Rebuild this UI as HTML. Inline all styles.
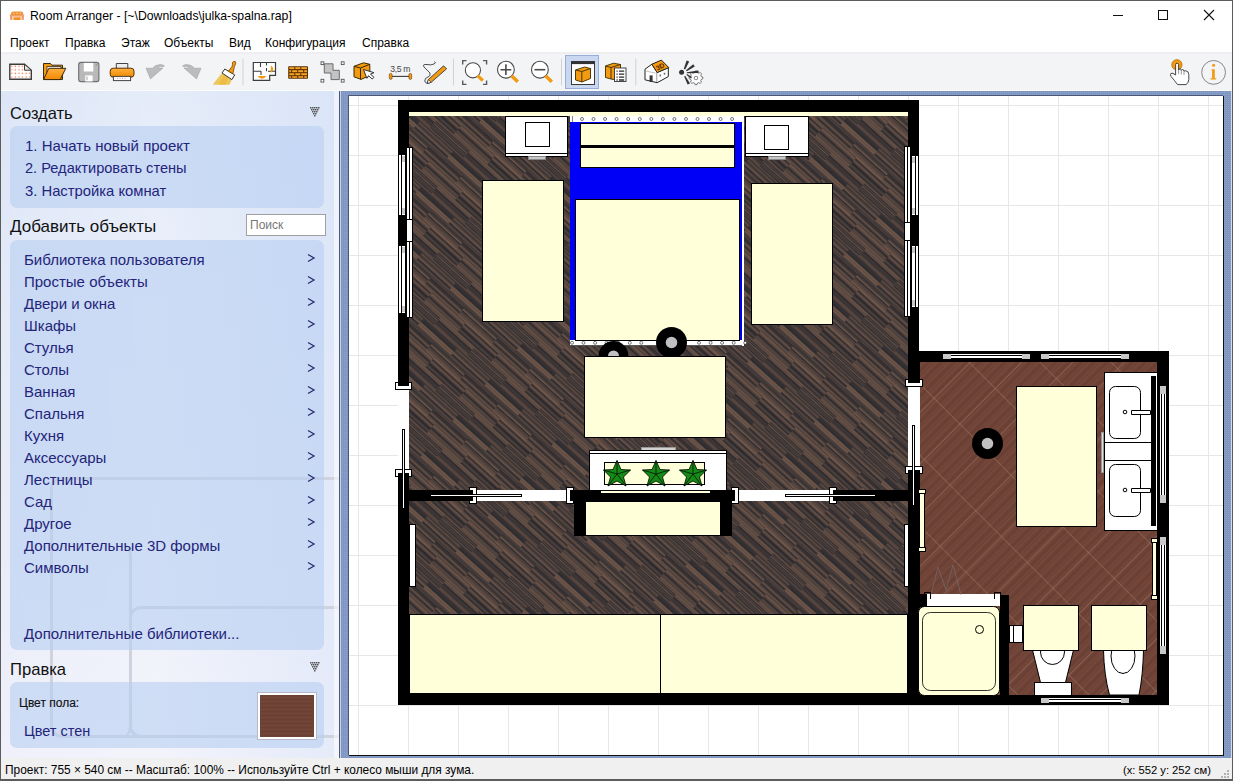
<!DOCTYPE html>
<html><head><meta charset="utf-8">
<style>
*{box-sizing:border-box}
html,body{margin:0;padding:0}
body{width:1233px;height:781px;position:relative;overflow:hidden;background:#f0f0f0;font-family:"Liberation Sans",sans-serif;color:#000}
.a{position:absolute}
.t{position:absolute;white-space:pre;line-height:1}
#title{left:0;top:0;width:1233px;height:31px;background:#fff}
#menu{left:0;top:31px;width:1233px;height:22px;background:#fff;border-bottom:1px solid #f0f0f0}
#tool{left:0;top:53px;width:1233px;height:38px;background:#f3f4f6;border-top:1px solid #ecedf0;border-bottom:1px solid #fbfbfc}
#panel{left:1px;top:91px;width:339px;height:667px;background:linear-gradient(90deg,rgba(255,255,255,0) 0%,rgba(255,255,255,.25) 45%,rgba(210,225,248,.35) 100%),linear-gradient(180deg,#dde6f7 0%,#e4eaf8 35%,#eaedf9 70%,#eff0fa 100%)}
.box{position:absolute;left:10px;width:314px;background:rgba(183,206,241,.6);border-radius:7px}
.hd{font-size:16.5px;color:#111}
.li{font-size:15px;color:#24247a}
.arr{position:absolute;left:306px}
#list .t{left:24px}
#status{left:0;top:758px;width:1233px;height:23px;background:#f0f0f0}
</style></head><body>
<div id="title" class="a"></div>
<div id="menu" class="a"></div>
<div id="tool" class="a"></div>
<div id="panel" class="a"></div>
<div id="status" class="a"></div>

<!-- title -->
<svg class="a" style="left:9px;top:10px" width="16" height="11" viewBox="0 0 16 11">
<rect x="2" y="1.4" width="12.2" height="5" rx="2.2" fill="#ef8e3c"/>
<rect x="3.9" y="2.7" width="1.9" height="1.1" fill="#ffcf70"/><rect x="7.1" y="2.7" width="1.9" height="1.1" fill="#ffcf70"/><rect x="10.3" y="2.7" width="1.9" height="1.1" fill="#ffcf70"/>
<rect x="3.5" y="5.6" width="9.2" height="1.6" fill="#f8c09a"/>
<path d="M0.8 5.5Q0.8 4.3 2.1 4.3Q3.5 4.3 3.5 5.5V10H1.2Z" fill="#f0a070"/>
<path d="M15.2 5.5Q15.2 4.3 13.9 4.3Q12.5 4.3 12.5 5.5V10H14.8Z" fill="#f0a070"/>
<rect x="4.3" y="7.2" width="7.5" height="2.8" rx=".8" fill="#f39028"/>
</svg>
<div class="t" style="left:30px;top:9.8px;font-size:12.25px">Room Arranger - [~\Downloads\julka-spalna.rap]</div>
<div class="a" style="left:1113px;top:15px;width:10px;height:1px;background:#111"></div>
<div class="a" style="left:1158px;top:10px;width:10px;height:10px;border:1px solid #111"></div>
<svg class="a" style="left:1203px;top:9px" width="12" height="12"><path d="M1 1L11 11M11 1L1 11" stroke="#111" stroke-width="1.1"/></svg>

<svg class="a" style="left:0;top:53px" width="1233" height="37" viewBox="0 53 1233 37">
<defs>
<pattern id="dots" patternUnits="userSpaceOnUse" width="3.6" height="3.6" x="10.5" y="65">
<rect x="0.6" y="0.6" width="1.3" height="1.3" fill="#ee7a4a"/>
</pattern>
<linearGradient id="og" x1="0" y1="0" x2="0" y2="1"><stop offset="0" stop-color="#ffb040"/><stop offset="1" stop-color="#f08a00"/></linearGradient>
</defs>
<!-- new -->
<path d="M9.8 64.3H24.5L31.3 70.2V79.2H9.8Z" fill="#fff" stroke="#3c3c3c" stroke-width="1.4"/>
<path d="M10.6 65H24.3L30.6 70.5V78.5H10.6Z" fill="url(#dots)"/>
<path d="M24.5 64.3V70.2H31.3Z" fill="#e8e8e8" stroke="#3c3c3c" stroke-width="1"/>
<!-- open -->
<path d="M43.5 79.5V63.5H50.5L51.8 65.2H62.5V79.5Z" fill="#f29a12" stroke="#3a2a10" stroke-width="1"/>
<path d="M47 79V66.5H61V75Z" fill="#fff" stroke="#3a2a10" stroke-width=".8"/>
<path d="M43.6 79.6L48.8 68.3H65.8L60.2 79.6Z" fill="url(#og)" stroke="#3a2a10" stroke-width="1"/>
<!-- save -->
<rect x="78.7" y="62.4" width="20.2" height="19.2" rx="2.2" fill="#b9b9b9" stroke="#6f6f6f" stroke-width="1.1"/>
<rect x="83.8" y="62.9" width="9.5" height="8.6" fill="#fff"/>
<rect x="85.2" y="75.4" width="7.4" height="6.1" fill="#fff"/>
<rect x="86.3" y="76.5" width="1.3" height="3.8" fill="#bbb"/>
<circle cx="96.3" cy="65" r=".7" fill="#888"/>
<!-- print -->
<path d="M116.3 69.8V63.5H127.8V69.8Z" fill="#eeeeee" stroke="#444" stroke-width="1"/>
<rect x="110.2" y="68.2" width="23.8" height="9" rx="3" fill="url(#og)" stroke="#5a3200" stroke-width="1"/>
<rect x="113.4" y="76.4" width="17.2" height="4.2" fill="#fff" stroke="#444" stroke-width="1"/>
<path d="M117 78.4h1M119.5 78.4h1M122 78.4h1M124.5 78.4h1" stroke="#d77" stroke-width=".8"/>
<!-- undo -->
<path d="M146 68.2H152.5Q155.5 64.6 160.5 64.6Q164.3 64.8 164.3 66.4H159.2Q158.2 67.2 159.2 68H163L150.5 78.9Z" fill="#bcbcbc" stroke="#a5a5a5" stroke-width=".6" stroke-linejoin="round"/>
<!-- redo -->
<path d="M201 68.2H194.5Q191.5 64.6 186.5 64.6Q182.7 64.8 182.7 66.4H187.8Q188.8 67.2 187.8 68H184L196.5 78.9Z" fill="#bcbcbc" stroke="#a5a5a5" stroke-width=".6" stroke-linejoin="round"/>
<!-- brush -->
<path d="M221.7 73.2L231.9 79.6L229.5 84.8H213.2Q213 84 214 83Z" fill="#ecc75a"/>
<path d="M224 74.6L228.5 77.4L225.5 84.8H219Z" fill="#f0b83a" opacity=".7"/>
<path d="M222 73L224.8 69L234.7 74.9L231.9 79.6Z" fill="#fff" stroke="#333" stroke-width="1" stroke-linejoin="round"/>
<path d="M228.4 71.2L232 66.6L232.5 64.4Q231.8 62 233.7 61.4Q236.2 61 235.7 63.6L234.4 66.6L232.9 73.6Z" fill="#f29a12" stroke="#7a4300" stroke-width=".8" stroke-linejoin="round"/>
<rect x="242.5" y="58.5" width="1" height="27" fill="#d2d2d2"/>
<!-- floor plan -->
<path d="M253.3 62.5H275.5V75.4H269.7V80.4H253.3Z" fill="#fff" stroke="#3c3c3c" stroke-width="1.2"/>
<path d="M253.3 71.2H261M268 71.2H275.5M260.5 62.5V67M266.5 62.5V65.5M266.5 68V71.2M261 71.2V75" fill="none" stroke="#3c3c3c" stroke-width="1.1"/>
<path d="M270.8 65.5Q276 69 270.8 73Z" fill="#f29a12"/>
<path d="M257.5 76Q262 81.5 266.5 76Z" fill="#f29a12"/>
<!-- brick -->
<rect x="288.2" y="66.2" width="19.8" height="12.5" rx=".8" fill="#5a2d00"/>
<g fill="#f6a423">
<rect x="289.3" y="67.2" width="5" height="1.9"/><rect x="295.3" y="67.2" width="5" height="1.9"/><rect x="301.3" y="67.2" width="5.7" height="1.9"/>
<rect x="289.3" y="70.2" width="1.9" height="2"/><rect x="292.2" y="70.2" width="5" height="2"/><rect x="298.2" y="70.2" width="5" height="2"/><rect x="304.2" y="70.2" width="2.8" height="2"/>
<rect x="289.3" y="73.2" width="5" height="2"/><rect x="295.3" y="73.2" width="5" height="2"/><rect x="301.3" y="73.2" width="5.7" height="2"/>
<rect x="289.3" y="76.2" width="1.9" height="1.6"/><rect x="292.2" y="76.2" width="5" height="1.6"/><rect x="298.2" y="76.2" width="5" height="1.6"/><rect x="304.2" y="76.2" width="2.8" height="1.6"/>
</g>
<!-- polygon -->
<path d="M324.3 63.8H333V70.3H339.3V79.6H331V73H324.3Z" fill="#c4c4c4" stroke="#6c6c6c" stroke-width="1"/>
<g fill="#fff" stroke="#555" stroke-width=".9">
<rect x="321" y="61.8" width="2.8" height="2.8"/><rect x="341.3" y="61.8" width="2.8" height="2.8"/><rect x="321" y="79.3" width="2.8" height="2.8"/><rect x="341.3" y="79.3" width="2.8" height="2.8"/>
</g>
<!-- box + cursor -->
<path d="M354 66.3L363.5 62.8L369.8 64.3L369.8 75.5L361 79.4L354 76.8Z" fill="#f29a12" stroke="#3a2a00" stroke-width="1"/>
<path d="M354 66.3L360.5 68L369.8 64.3M360.5 68V79.2" fill="none" stroke="#3a2a00" stroke-width="1"/>
<path d="M365 67.8L365.2 77.3L367.6 75.4L370 79.8L372.2 78.7L370 74.6L373.8 74.4Z" fill="#fff" stroke="#333" stroke-width=".9" transform="rotate(-20 369 73)"/>
<!-- 3.5m -->
<text x="390.2" y="71.6" font-family="Liberation Sans" font-size="8.6" fill="#444" letter-spacing="-.3">3,5 m</text>
<path d="M391 76.4H410" stroke="#3a3a3a" stroke-width="1.1"/>
<rect x="389.3" y="73.4" width="2.8" height="6" rx="1.4" fill="#f29a12" stroke="#6a3a00" stroke-width=".6"/>
<rect x="408.9" y="73.4" width="2.8" height="6" rx="1.4" fill="#f29a12" stroke="#6a3a00" stroke-width=".6"/>
<!-- pencil -->
<path d="M434.5 61.5Q436.5 63 434 64Q431 65.5 427 64.5Q422 64 424 67Q427 70 430 73Q431 76 428 77Q424.5 78 424.8 81Q425.5 84 428.5 82.5" fill="none" stroke="#3a3a3a" stroke-width=".9"/>
<path d="M443.6 65.8L446.6 68.8L431.2 82.3L427.2 83.6L428.4 79.5Z" fill="#f29a12" stroke="#3a3a3a" stroke-width=".9"/>
<path d="M428.4 79.5L431.2 82.3L427.2 83.6Z" fill="#fff" stroke="#3a3a3a" stroke-width=".8"/>
<rect x="453" y="58.5" width="1" height="27" fill="#d2d2d2"/>
<!-- zoom fit -->
<path d="M462.7 64.5V60.6H466.5M483 60.6H486.6V64.5M462.7 80.5V84.4H466.5M483 84.4H486.6V80.5" fill="none" stroke="#5a5a5a" stroke-width="1.4"/>
<circle cx="472.9" cy="70.3" r="7.6" fill="#fff" stroke="#4a4a4a" stroke-width="1.1"/>
<path d="M477.6 75.6L482.8 80.5" stroke="#f29a12" stroke-width="3.3"/>
<!-- zoom in -->
<circle cx="505.9" cy="69.7" r="8.4" fill="#fff" stroke="#4a4a4a" stroke-width="1.1"/>
<path d="M500.5 69.7H511.3M505.9 64.3V75.1" stroke="#4a4a4a" stroke-width="1.6"/>
<path d="M511.5 75.7L517.8 81.8" stroke="#f29a12" stroke-width="3.5"/>
<!-- zoom out -->
<circle cx="539.9" cy="69.7" r="8.4" fill="#fff" stroke="#4a4a4a" stroke-width="1.1"/>
<path d="M534.5 69.7H545.3" stroke="#4a4a4a" stroke-width="1.6"/>
<path d="M545.5 75.7L551.8 81.8" stroke="#f29a12" stroke-width="3.5"/>
<rect x="561" y="58.5" width="1" height="27" fill="#d2d2d2"/>
<!-- active button -->
<rect x="565.5" y="55.5" width="33" height="33" fill="#c9d7f0" stroke="#97aedb" stroke-width="1"/>
<rect x="571.5" y="61.5" width="23" height="23" fill="#fff" stroke="#3a3a3a" stroke-width="1"/>
<rect x="571.5" y="61.5" width="23" height="2.6" fill="#333"/>
<path d="M575.5 70L584.5 67L590.5 68.5V78.5L582 82L575.5 80Z" fill="#f29a12" stroke="#3a2a00" stroke-width=".9"/>
<path d="M575.5 70L581.8 71.5L590.5 68.5M581.8 71.5V81.8" fill="none" stroke="#3a2a00" stroke-width=".9"/>
<!-- box list -->
<path d="M605.5 66L613.5 63.2L620.5 64.5V76.5L613 79.5L605.5 77.5Z" fill="#f29a12" stroke="#3a2a00" stroke-width=".9"/>
<path d="M605.5 66L611 67.5L620.5 64.5M611 67.5V79" fill="none" stroke="#3a2a00" stroke-width=".9"/>
<rect x="614.5" y="68" width="11.5" height="13.5" fill="#fff" stroke="#333" stroke-width=".9"/>
<path d="M616.5 71.2h1.2M619 71.2h5.2M616.5 74.2h1.2M619 74.2h5.2M616.5 77.2h1.2M619 77.2h5.2M616.5 80h1.2M619 80h5.2" stroke="#2a2a2a" stroke-width="1.3"/>
<rect x="635.3" y="58.5" width="1" height="27" fill="#d2d2d2"/>
<!-- 3d house -->
<path d="M645 79.8V69.2L651.9 64.2L657.2 72.4V82.7Z" fill="#fff" stroke="#222" stroke-width="1" stroke-linejoin="round"/>
<path d="M657.2 72.4L668.3 67.6V76.6L657.2 82.7" fill="#fff" stroke="#222" stroke-width="1" stroke-linejoin="round"/>
<path d="M651.9 64.2L661.4 60.1L668.8 67.6L657.2 72.6Z" fill="#f29a12" stroke="#222" stroke-width="1" stroke-linejoin="round"/>
<text x="655.5" y="69" font-family="Liberation Sans" font-size="6.8" font-weight="bold" fill="#4a1e00" transform="rotate(-28 660 66)">3D</text>
<rect x="649.6" y="75.4" width="3" height="6.6" fill="#333"/>
<path d="M646 71Q650 72 655.5 73" stroke="#999" stroke-width=".6" fill="none"/>
<rect x="659.5" y="74.6" width="1.6" height="1.8" fill="#666"/><rect x="663.7" y="72.8" width="1.6" height="1.8" fill="#666"/>
<!-- light gear -->
<circle cx="681.6" cy="72.2" r="2.5" fill="#333"/>
<g transform="translate(696 78)">
<path d="M-1.2 -7H1.2L1.6 -5.1L3.4 -4.3L5 -5.4L6.6 -3.8L5.6 -2.2L6.2 -0.5L8 0V2.2L6.2 2.7L5.5 4.4L6.5 6L4.8 7.6L3.2 6.6L1.5 7.3L1.2 9H-1.2L-1.5 7.3L-3.2 6.6L-4.8 7.6L-6.5 6L-5.5 4.4L-6.2 2.7L-8 2.2V0L-6.2 -0.5L-5.6 -2.2L-6.6 -3.8L-5 -5.4L-3.4 -4.3L-1.6 -5.1Z" fill="#fff" stroke="#444" stroke-width=".8" transform="translate(0 -1) scale(.85)"/>
<circle cx="0" cy="0" r="1.8" fill="#fff" stroke="#555" stroke-width=".7"/>
</g>
<path d="M683.8 68.8L686.6 60.4L689.2 61.6L685.2 69.6ZM686 70.2L693.2 64.2L694.8 66.4L686.8 71.2ZM686.8 72.2L698.5 70.6L698.6 73L686.8 73.2ZM685.2 75.8L690 83.4L687.6 84.6L684.2 76.4Z" fill="#333"/>
<path d="M687 74L692 77L691 78.5L686.5 75Z" fill="#333"/>
<!-- hand -->
<circle cx="1176.9" cy="64.8" r="5.2" fill="#f29a12" stroke="#a05a00" stroke-width=".6"/>
<path d="M1175.6 75V64.6Q1175.6 63.2 1177.1 63.2Q1178.6 63.2 1178.6 64.6V70.2Q1178.8 68.8 1180 68.8Q1181.2 68.8 1181.3 70.4Q1181.6 69.6 1182.7 69.6Q1184 69.6 1184 71.3Q1184.4 70.8 1185.6 70.8Q1188.6 71 1188.8 74.5V79.5Q1188.6 82.5 1186.2 84.6H1177.6Q1174.5 80.5 1171.2 76.6Q1169.8 74.6 1171 73.4Q1172.6 72.4 1175.6 75Z" fill="#fff" stroke="#333" stroke-width=".9" stroke-linejoin="round"/>
<path d="M1178.6 70.4V74M1181.3 70.6V74.5M1184 71.4V75" stroke="#555" stroke-width=".6"/>
<!-- info -->
<circle cx="1213.6" cy="72.4" r="11.9" fill="none" stroke="#7a7a7a" stroke-width=".9"/>
<circle cx="1213.6" cy="65.3" r="1.5" fill="#f29a12"/>
<path d="M1211.5 69.2H1214.8V78.2H1216.2V79.6H1210.4V78.2H1212.1V70.6H1211.5Z" fill="#f29a12"/>
</svg>

<!-- menu -->
<div class="t" style="left:10px;top:37px;font-size:12px">Проект</div>
<div class="t" style="left:65px;top:37px;font-size:12px">Правка</div>
<div class="t" style="left:121px;top:37px;font-size:12px">Этаж</div>
<div class="t" style="left:164px;top:37px;font-size:12px">Объекты</div>
<div class="t" style="left:229px;top:37px;font-size:12px">Вид</div>
<div class="t" style="left:265px;top:37px;font-size:12px">Конфигурация</div>
<div class="t" style="left:362px;top:37px;font-size:12px">Справка</div>

<!-- status -->
<div class="t" style="left:5px;top:764.9px;font-size:11.9px">Проект: 755 × 540 см -- Масштаб: 100% -- Используйте Ctrl + колесо мыши для зума.</div>
<div class="t" style="left:1123px;top:764.8px;font-size:11.2px">(x: 552 y: 252 см)</div>
<svg class="a" style="left:0;top:0" width="1233" height="781"><g fill="#b4b4b4"><rect x="1227" y="770" width="2" height="2"/><rect x="1224" y="773" width="2" height="2"/><rect x="1227" y="773" width="2" height="2"/><rect x="1221" y="776" width="2" height="2"/><rect x="1224" y="776" width="2" height="2"/><rect x="1227" y="776" width="2" height="2"/></g></svg>

<!-- watermark -->
<div class="a" style="left:50px;top:477px;width:300px;height:261px;border:3px solid #cfd3dd;border-radius:12px"></div>
<div class="a" style="left:80px;top:543px;width:52px;height:195px;border-right:3px solid #cfd3dd;border-top-right-radius:12px;border-bottom-right-radius:12px"></div>
<div class="a" style="left:129px;top:606px;width:220px;height:132px;border:3px solid #cfd3dd;border-radius:12px"></div>
<div class="t hd" style="left:10px;top:104.8px">Создать</div>
<svg class="a" style="left:309px;top:106px" width="11" height="11"><g fill="#555"><rect x="1" y="1" width="1.5" height="1.5"/><rect x="3" y="1" width="1.5" height="1.5"/><rect x="5" y="1" width="1.5" height="1.5"/><rect x="7" y="1" width="1.5" height="1.5"/><rect x="9" y="1" width="1.5" height="1.5"/><rect x="2" y="3" width="1.5" height="1.5"/><rect x="4" y="3" width="1.5" height="1.5"/><rect x="6" y="3" width="1.5" height="1.5"/><rect x="8" y="3" width="1.5" height="1.5"/><rect x="3" y="5" width="1.5" height="1.5"/><rect x="5" y="5" width="1.5" height="1.5"/><rect x="7" y="5" width="1.5" height="1.5"/><rect x="4" y="7" width="1.5" height="1.5"/><rect x="6" y="7" width="1.5" height="1.5"/><rect x="5" y="9" width="1.5" height="1.5"/></g></svg>
<div class="box" style="top:126px;height:82px"></div>
<div class="t li" style="left:25px;top:138.4px">1. Начать новый проект</div>
<div class="t li" style="left:25px;top:160.8px;font-size:14.6px">2. Редактировать стены</div>
<div class="t li" style="left:25px;top:184.1px;font-size:14.8px">3. Настройка комнат</div>

<div class="t hd" style="left:10px;top:217.9px;font-size:17px">Добавить объекты</div>
<div class="a" style="left:246px;top:214px;width:80px;height:22px;background:#fff;border:1px solid #a0a0a0"></div>
<div class="t" style="left:250px;top:219px;font-size:12px;color:#777">Поиск</div>

<div class="box" style="top:240px;height:410px"></div>
<div id="list" class="a" style="left:0;top:0">
<div class="t li" style="top:252px">Библиотека пользователя</div><svg class="arr" style="top:253px" width="10" height="10"><path d="M2 1.5L8 5L2 8.5" fill="none" stroke="#2a2a72" stroke-width="1.3"/></svg>
<div class="t li" style="top:274px">Простые объекты</div><svg class="arr" style="top:275px" width="10" height="10"><path d="M2 1.5L8 5L2 8.5" fill="none" stroke="#2a2a72" stroke-width="1.3"/></svg>
<div class="t li" style="top:296px">Двери и окна</div><svg class="arr" style="top:297px" width="10" height="10"><path d="M2 1.5L8 5L2 8.5" fill="none" stroke="#2a2a72" stroke-width="1.3"/></svg>
<div class="t li" style="top:318px">Шкафы</div><svg class="arr" style="top:319px" width="10" height="10"><path d="M2 1.5L8 5L2 8.5" fill="none" stroke="#2a2a72" stroke-width="1.3"/></svg>
<div class="t li" style="top:340px">Стулья</div><svg class="arr" style="top:341px" width="10" height="10"><path d="M2 1.5L8 5L2 8.5" fill="none" stroke="#2a2a72" stroke-width="1.3"/></svg>
<div class="t li" style="top:362px">Столы</div><svg class="arr" style="top:363px" width="10" height="10"><path d="M2 1.5L8 5L2 8.5" fill="none" stroke="#2a2a72" stroke-width="1.3"/></svg>
<div class="t li" style="top:384px">Ванная</div><svg class="arr" style="top:385px" width="10" height="10"><path d="M2 1.5L8 5L2 8.5" fill="none" stroke="#2a2a72" stroke-width="1.3"/></svg>
<div class="t li" style="top:406px">Спальня</div><svg class="arr" style="top:407px" width="10" height="10"><path d="M2 1.5L8 5L2 8.5" fill="none" stroke="#2a2a72" stroke-width="1.3"/></svg>
<div class="t li" style="top:428px">Кухня</div><svg class="arr" style="top:429px" width="10" height="10"><path d="M2 1.5L8 5L2 8.5" fill="none" stroke="#2a2a72" stroke-width="1.3"/></svg>
<div class="t li" style="top:450px">Аксессуары</div><svg class="arr" style="top:451px" width="10" height="10"><path d="M2 1.5L8 5L2 8.5" fill="none" stroke="#2a2a72" stroke-width="1.3"/></svg>
<div class="t li" style="top:472px">Лестницы</div><svg class="arr" style="top:473px" width="10" height="10"><path d="M2 1.5L8 5L2 8.5" fill="none" stroke="#2a2a72" stroke-width="1.3"/></svg>
<div class="t li" style="top:494px">Сад</div><svg class="arr" style="top:495px" width="10" height="10"><path d="M2 1.5L8 5L2 8.5" fill="none" stroke="#2a2a72" stroke-width="1.3"/></svg>
<div class="t li" style="top:516px">Другое</div><svg class="arr" style="top:517px" width="10" height="10"><path d="M2 1.5L8 5L2 8.5" fill="none" stroke="#2a2a72" stroke-width="1.3"/></svg>
<div class="t li" style="top:538px">Дополнительные 3D формы</div><svg class="arr" style="top:539px" width="10" height="10"><path d="M2 1.5L8 5L2 8.5" fill="none" stroke="#2a2a72" stroke-width="1.3"/></svg>
<div class="t li" style="top:560px">Символы</div><svg class="arr" style="top:561px" width="10" height="10"><path d="M2 1.5L8 5L2 8.5" fill="none" stroke="#2a2a72" stroke-width="1.3"/></svg>
</div>
<div class="t li" style="left:24px;top:626.3px">Дополнительные библиотеки...</div>

<div class="t hd" style="left:10px;top:661.5px;font-size:16.6px">Правка</div>
<svg class="a" style="left:309px;top:661px" width="11" height="11"><g fill="#555"><rect x="1" y="1" width="1.5" height="1.5"/><rect x="3" y="1" width="1.5" height="1.5"/><rect x="5" y="1" width="1.5" height="1.5"/><rect x="7" y="1" width="1.5" height="1.5"/><rect x="9" y="1" width="1.5" height="1.5"/><rect x="2" y="3" width="1.5" height="1.5"/><rect x="4" y="3" width="1.5" height="1.5"/><rect x="6" y="3" width="1.5" height="1.5"/><rect x="8" y="3" width="1.5" height="1.5"/><rect x="3" y="5" width="1.5" height="1.5"/><rect x="5" y="5" width="1.5" height="1.5"/><rect x="7" y="5" width="1.5" height="1.5"/><rect x="4" y="7" width="1.5" height="1.5"/><rect x="6" y="7" width="1.5" height="1.5"/><rect x="5" y="9" width="1.5" height="1.5"/></g></svg>
<div class="box" style="top:682px;height:66px"></div>
<div class="t" style="left:19px;top:696.8px;font-size:12px;color:#111;-webkit-text-stroke:.15px #111">Цвет пола:</div>
<div class="t li" style="left:24px;top:724px;font-size:14.5px">Цвет стен</div>
<div class="a" style="left:257px;top:692px;width:60px;height:48px;background:#fff;border:1px solid #b8b8c8"></div>
<div class="a" style="left:260px;top:695px;width:54px;height:42px;background:repeating-linear-gradient(180deg,#6f4335 0px,#673c30 1px,#76493a 2px,#6c4134 3px,#714536 4px)"></div>
<div class="a" style="left:334px;top:91px;width:5px;height:667px;background:rgba(255,255,255,.55)"></div>



<svg class="a" style="left:339px;top:90px" width="894" height="668" viewBox="339 90 894 668">
<defs>
<pattern id="wood" patternUnits="userSpaceOnUse" width="48" height="90" patternTransform="rotate(-48)">
<rect width="48" height="90" fill="#403735"/>
<rect x="0.00" y="0" width="1.10" height="45" fill="#5e4840"/>
<rect x="1.10" y="0" width="0.70" height="45" fill="#5a4a42"/>
<rect x="1.80" y="0" width="1.60" height="45" fill="#4c3f3b"/>
<rect x="3.40" y="0" width="1.00" height="45" fill="#29282d"/>
<rect x="4.40" y="0" width="1.00" height="45" fill="#453a38"/>
<rect x="5.40" y="0" width="0.90" height="45" fill="#383434"/>
<rect x="6.30" y="0" width="1.60" height="45" fill="#29282d"/>
<rect x="7.90" y="0" width="1.00" height="45" fill="#6c5347"/>
<rect x="8.90" y="0" width="1.00" height="45" fill="#53453e"/>
<rect x="9.90" y="0" width="1.30" height="45" fill="#6c5347"/>
<rect x="11.20" y="0" width="0.80" height="45" fill="#5a4a42"/>
<rect x="0.00" y="45" width="1.00" height="45" fill="#5a4a42"/>
<rect x="1.00" y="45" width="1.00" height="45" fill="#2e2c30"/>
<rect x="2.00" y="45" width="1.30" height="45" fill="#4c3f3b"/>
<rect x="3.30" y="45" width="0.90" height="45" fill="#383434"/>
<rect x="4.20" y="45" width="0.70" height="45" fill="#53453e"/>
<rect x="4.90" y="45" width="1.30" height="45" fill="#333033"/>
<rect x="6.20" y="45" width="1.10" height="45" fill="#73594b"/>
<rect x="7.30" y="45" width="1.00" height="45" fill="#29282d"/>
<rect x="8.30" y="45" width="0.90" height="45" fill="#5a4a42"/>
<rect x="9.20" y="45" width="1.00" height="45" fill="#2e2c30"/>
<rect x="10.20" y="45" width="0.90" height="45" fill="#654d43"/>
<rect x="11.10" y="45" width="0.90" height="45" fill="#5e4840"/>
<rect x="12.00" y="22" width="1.60" height="45" fill="#2e2c30"/>
<rect x="13.60" y="22" width="1.00" height="45" fill="#4c3f3b"/>
<rect x="14.60" y="22" width="0.70" height="45" fill="#5a4a42"/>
<rect x="15.30" y="22" width="0.90" height="45" fill="#383434"/>
<rect x="16.20" y="22" width="2.00" height="45" fill="#29282d"/>
<rect x="18.20" y="22" width="1.10" height="45" fill="#4c3f3b"/>
<rect x="19.30" y="22" width="2.00" height="45" fill="#654d43"/>
<rect x="21.30" y="22" width="0.90" height="45" fill="#2e2c30"/>
<rect x="22.20" y="22" width="1.00" height="45" fill="#383434"/>
<rect x="23.20" y="22" width="0.80" height="45" fill="#73594b"/>
<rect x="12.00" y="67" width="1.30" height="23" fill="#5a4a42"/>
<rect x="12.00" y="0" width="1.30" height="22" fill="#5a4a42"/>
<rect x="13.30" y="67" width="1.00" height="23" fill="#73594b"/>
<rect x="13.30" y="0" width="1.00" height="22" fill="#73594b"/>
<rect x="14.30" y="67" width="0.90" height="23" fill="#4c3f3b"/>
<rect x="14.30" y="0" width="0.90" height="22" fill="#4c3f3b"/>
<rect x="15.20" y="67" width="1.10" height="23" fill="#53453e"/>
<rect x="15.20" y="0" width="1.10" height="22" fill="#53453e"/>
<rect x="16.30" y="67" width="0.70" height="23" fill="#5e4840"/>
<rect x="16.30" y="0" width="0.70" height="22" fill="#5e4840"/>
<rect x="17.00" y="67" width="0.70" height="23" fill="#53453e"/>
<rect x="17.00" y="0" width="0.70" height="22" fill="#53453e"/>
<rect x="17.70" y="67" width="1.60" height="23" fill="#29282d"/>
<rect x="17.70" y="0" width="1.60" height="22" fill="#29282d"/>
<rect x="19.30" y="67" width="1.30" height="23" fill="#453a38"/>
<rect x="19.30" y="0" width="1.30" height="22" fill="#453a38"/>
<rect x="20.60" y="67" width="1.00" height="23" fill="#73594b"/>
<rect x="20.60" y="0" width="1.00" height="22" fill="#73594b"/>
<rect x="21.60" y="67" width="2.00" height="23" fill="#6c5347"/>
<rect x="21.60" y="0" width="2.00" height="22" fill="#6c5347"/>
<rect x="23.60" y="67" width="0.40" height="23" fill="#29282d"/>
<rect x="23.60" y="0" width="0.40" height="22" fill="#29282d"/>
<rect x="24.00" y="11" width="1.00" height="45" fill="#73594b"/>
<rect x="25.00" y="11" width="1.00" height="45" fill="#5e4840"/>
<rect x="26.00" y="11" width="1.00" height="45" fill="#5a4a42"/>
<rect x="27.00" y="11" width="0.90" height="45" fill="#53453e"/>
<rect x="27.90" y="11" width="2.00" height="45" fill="#4c3f3b"/>
<rect x="29.90" y="11" width="1.10" height="45" fill="#29282d"/>
<rect x="31.00" y="11" width="1.00" height="45" fill="#73594b"/>
<rect x="32.00" y="11" width="1.60" height="45" fill="#53453e"/>
<rect x="33.60" y="11" width="1.30" height="45" fill="#333033"/>
<rect x="34.90" y="11" width="1.00" height="45" fill="#383434"/>
<rect x="35.90" y="11" width="0.10" height="45" fill="#6c5347"/>
<rect x="24.00" y="56" width="1.10" height="34" fill="#5a4a42"/>
<rect x="24.00" y="0" width="1.10" height="11" fill="#5a4a42"/>
<rect x="25.10" y="56" width="1.00" height="34" fill="#654d43"/>
<rect x="25.10" y="0" width="1.00" height="11" fill="#654d43"/>
<rect x="26.10" y="56" width="1.30" height="34" fill="#383434"/>
<rect x="26.10" y="0" width="1.30" height="11" fill="#383434"/>
<rect x="27.40" y="56" width="0.90" height="34" fill="#29282d"/>
<rect x="27.40" y="0" width="0.90" height="11" fill="#29282d"/>
<rect x="28.30" y="56" width="1.10" height="34" fill="#5e4840"/>
<rect x="28.30" y="0" width="1.10" height="11" fill="#5e4840"/>
<rect x="29.40" y="56" width="1.00" height="34" fill="#73594b"/>
<rect x="29.40" y="0" width="1.00" height="11" fill="#73594b"/>
<rect x="30.40" y="56" width="0.70" height="34" fill="#453a38"/>
<rect x="30.40" y="0" width="0.70" height="11" fill="#453a38"/>
<rect x="31.10" y="56" width="1.10" height="34" fill="#2e2c30"/>
<rect x="31.10" y="0" width="1.10" height="11" fill="#2e2c30"/>
<rect x="32.20" y="56" width="0.90" height="34" fill="#383434"/>
<rect x="32.20" y="0" width="0.90" height="11" fill="#383434"/>
<rect x="33.10" y="56" width="1.30" height="34" fill="#29282d"/>
<rect x="33.10" y="0" width="1.30" height="11" fill="#29282d"/>
<rect x="34.40" y="56" width="1.00" height="34" fill="#654d43"/>
<rect x="34.40" y="0" width="1.00" height="11" fill="#654d43"/>
<rect x="35.40" y="56" width="0.60" height="34" fill="#2e2c30"/>
<rect x="35.40" y="0" width="0.60" height="11" fill="#2e2c30"/>
<rect x="36.00" y="33" width="1.10" height="45" fill="#53453e"/>
<rect x="37.10" y="33" width="0.70" height="45" fill="#5e4840"/>
<rect x="37.80" y="33" width="1.30" height="45" fill="#333033"/>
<rect x="39.10" y="33" width="0.90" height="45" fill="#2e2c30"/>
<rect x="40.00" y="33" width="1.00" height="45" fill="#6c5347"/>
<rect x="41.00" y="33" width="1.00" height="45" fill="#5a4a42"/>
<rect x="42.00" y="33" width="1.30" height="45" fill="#4c3f3b"/>
<rect x="43.30" y="33" width="1.10" height="45" fill="#333033"/>
<rect x="44.40" y="33" width="0.70" height="45" fill="#53453e"/>
<rect x="45.10" y="33" width="1.00" height="45" fill="#654d43"/>
<rect x="46.10" y="33" width="1.00" height="45" fill="#383434"/>
<rect x="47.10" y="33" width="0.70" height="45" fill="#4c3f3b"/>
<rect x="47.80" y="33" width="0.20" height="45" fill="#333033"/>
<rect x="36.00" y="78" width="0.70" height="12" fill="#5a4a42"/>
<rect x="36.00" y="0" width="0.70" height="33" fill="#5a4a42"/>
<rect x="36.70" y="78" width="1.00" height="12" fill="#333033"/>
<rect x="36.70" y="0" width="1.00" height="33" fill="#333033"/>
<rect x="37.70" y="78" width="2.00" height="12" fill="#73594b"/>
<rect x="37.70" y="0" width="2.00" height="33" fill="#73594b"/>
<rect x="39.70" y="78" width="1.00" height="12" fill="#654d43"/>
<rect x="39.70" y="0" width="1.00" height="33" fill="#654d43"/>
<rect x="40.70" y="78" width="1.60" height="12" fill="#73594b"/>
<rect x="40.70" y="0" width="1.60" height="33" fill="#73594b"/>
<rect x="42.30" y="78" width="0.70" height="12" fill="#383434"/>
<rect x="42.30" y="0" width="0.70" height="33" fill="#383434"/>
<rect x="43.00" y="78" width="1.10" height="12" fill="#29282d"/>
<rect x="43.00" y="0" width="1.10" height="33" fill="#29282d"/>
<rect x="44.10" y="78" width="1.60" height="12" fill="#333033"/>
<rect x="44.10" y="0" width="1.60" height="33" fill="#333033"/>
<rect x="45.70" y="78" width="1.00" height="12" fill="#29282d"/>
<rect x="45.70" y="0" width="1.00" height="33" fill="#29282d"/>
<rect x="46.70" y="78" width="1.30" height="12" fill="#453a38"/>
<rect x="46.70" y="0" width="1.30" height="33" fill="#453a38"/>
</pattern>
<pattern id="wood2" patternUnits="userSpaceOnUse" width="36" height="36" patternTransform="rotate(-50)">
<rect x="0" y="0" width="18" height="18" fill="#000" opacity=".12"/>
<rect x="18" y="18" width="18" height="18" fill="#fff" opacity=".05"/>
</pattern>
<pattern id="dith" patternUnits="userSpaceOnUse" width="2" height="2"><rect x="0" y="0" width="1" height="1" fill="#9fb2d8" opacity=".5"/></pattern>
<pattern id="tile" patternUnits="userSpaceOnUse" x="31.6" y="22.2" width="36.4" height="50.2" patternTransform="rotate(45)">
<rect x="0" y="0" width="0.9" height="50.2" fill="#a58070" opacity=".45"/>
<rect x="0" y="0" width="36.4" height="0.9" fill="#a58070" opacity=".45"/>
</pattern>
<pattern id="streak" patternUnits="userSpaceOnUse" width="9" height="50" patternTransform="rotate(45)">
<rect x="0" y="0" width="1" height="50" fill="#7f5040" opacity=".55"/>
<rect x="3" y="0" width="1.5" height="50" fill="#5f382c" opacity=".45"/>
<rect x="6" y="0" width="1" height="50" fill="#7a4c3d" opacity=".4"/>
</pattern>
</defs>
<g shape-rendering="crispEdges">
<rect x="339" y="91" width="1" height="667" fill="#4e5874"/><rect x="340" y="91" width="1" height="667" fill="#c9d2e6"/>
<rect x="341" y="91" width="890" height="667" fill="#7f96c3"/><rect x="341" y="91" width="890" height="667" fill="url(#dith)"/>
<rect x="339" y="90" width="893" height="1" fill="#fbfbfc"/>
<rect x="349" y="96" width="874" height="659" fill="#fff"/>
<rect x="348" y="95" width="875" height="1" fill="#4a5676"/>
<rect x="348" y="95" width="1" height="660" fill="#4a5676"/>
<rect x="1223" y="96" width="1" height="660" fill="#111"/>
<rect x="349" y="755" width="875" height="1" fill="#111"/>
<rect x="1231" y="91" width="1" height="667" fill="#d8dce6"/>
</g>
<g fill="#e7e7e7" shape-rendering="crispEdges">
<rect x="358" y="96" width="1" height="659"/><rect x="408" y="96" width="1" height="659"/><rect x="458" y="96" width="1" height="659"/><rect x="508" y="96" width="1" height="659"/><rect x="558" y="96" width="1" height="659"/><rect x="608" y="96" width="1" height="659"/><rect x="658" y="96" width="1" height="659"/><rect x="708" y="96" width="1" height="659"/><rect x="758" y="96" width="1" height="659"/><rect x="808" y="96" width="1" height="659"/><rect x="858" y="96" width="1" height="659"/><rect x="908" y="96" width="1" height="659"/><rect x="958" y="96" width="1" height="659"/><rect x="1008" y="96" width="1" height="659"/><rect x="1058" y="96" width="1" height="659"/><rect x="1108" y="96" width="1" height="659"/><rect x="1158" y="96" width="1" height="659"/><rect x="1208" y="96" width="1" height="659"/>
<rect x="349" y="105" width="874" height="1"/><rect x="349" y="155" width="874" height="1"/><rect x="349" y="205" width="874" height="1"/><rect x="349" y="255" width="874" height="1"/><rect x="349" y="305" width="874" height="1"/><rect x="349" y="355" width="874" height="1"/><rect x="349" y="405" width="874" height="1"/><rect x="349" y="455" width="874" height="1"/><rect x="349" y="505" width="874" height="1"/><rect x="349" y="555" width="874" height="1"/><rect x="349" y="605" width="874" height="1"/><rect x="349" y="655" width="874" height="1"/><rect x="349" y="705" width="874" height="1"/>
</g>
<!-- walls -->
<g shape-rendering="crispEdges">
<rect x="398" y="100" width="521" height="605" fill="#000"/>
<rect x="908" y="351" width="261" height="354" fill="#000"/>
<rect x="409" y="116" width="499" height="578" fill="url(#wood)"/>
<rect x="409" y="112" width="499" height="4" fill="#ffffd9"/>
<rect x="920" y="362" width="237" height="333" fill="#6f4337"/>
<rect x="920" y="362" width="237" height="333" fill="url(#streak)"/>
<rect x="920" y="362" width="237" height="333" fill="url(#tile)"/>
</g>
<g id="fp" stroke-linejoin="miter">
<!-- left wall windows -->
<g shape-rendering="crispEdges" stroke="#000" stroke-width="1">
<rect x="398.5" y="154.5" width="7" height="61" fill="#fff"/>
<path d="M401.5 155V215" />
<rect x="402" y="156" width="3" height="6" fill="#c8c8c8" stroke="none"/>
<rect x="402" y="208" width="3" height="6" fill="#c8c8c8" stroke="none"/>
<rect x="398.5" y="245.5" width="7" height="68" fill="#fff"/>
<path d="M401.5 246V313" />
<rect x="402" y="247" width="3" height="6" fill="#c8c8c8" stroke="none"/>
<rect x="402" y="306" width="3" height="6" fill="#c8c8c8" stroke="none"/>
<rect x="406.5" y="147.5" width="6" height="170" fill="#fff"/>
<path d="M409.5 148V219M406 219.5H413M406 241.5H413M409.5 242V317"/>
</g>
<!-- right wall windows (bedroom) -->
<g shape-rendering="crispEdges" stroke="#000" stroke-width="1">
<rect x="911.5" y="155.5" width="7" height="60" fill="#fff"/>
<path d="M915.5 156V215" />
<rect x="912" y="157" width="3" height="6" fill="#c8c8c8" stroke="none"/>
<rect x="912" y="208" width="3" height="6" fill="#c8c8c8" stroke="none"/>
<rect x="911.5" y="245.5" width="7" height="62" fill="#fff"/>
<path d="M915.5 246V307" />
<rect x="912" y="247" width="3" height="6" fill="#c8c8c8" stroke="none"/>
<rect x="912" y="300" width="3" height="6" fill="#c8c8c8" stroke="none"/>
<rect x="904.5" y="146.5" width="6" height="170" fill="#fff"/>
<path d="M907.5 147V222M904 222.5H911M904 240.5H911M907.5 241V316"/>
</g>
<!-- doors in walls -->
<g shape-rendering="crispEdges">
<rect x="398" y="386" width="11" height="87" fill="#fff"/>
<rect x="395.5" y="382.5" width="16" height="7" fill="#fff" stroke="#000"/>
<rect x="398" y="378" width="11" height="8" fill="#000"/>
<rect x="395.5" y="469.5" width="16" height="7" fill="#fff" stroke="#000"/>
<rect x="398" y="473" width="11" height="10" fill="#000"/>
<rect x="402.5" y="429.5" width="2" height="79" fill="#fff" stroke="#000" stroke-width="1"/>

<rect x="908" y="383" width="12" height="87" fill="#fff"/>
<rect x="905.5" y="379.5" width="17" height="7" fill="#fff" stroke="#000"/>
<rect x="908" y="375" width="12" height="8" fill="#000"/>
<rect x="905.5" y="466.5" width="17" height="7" fill="#fff" stroke="#000"/>
<rect x="908" y="470" width="12" height="10" fill="#000"/>
<rect x="912.5" y="425.5" width="2" height="80" fill="#fff" stroke="#000" stroke-width="1"/>

<rect x="409" y="490" width="499" height="11" fill="#000"/>
<rect x="473" y="490" width="97" height="11" fill="#fff"/>
<rect x="735" y="490" width="98" height="11" fill="#fff"/>
<rect x="469.5" y="487.5" width="7" height="16" fill="#fff" stroke="#000"/>
<rect x="462" y="490" width="11" height="11" fill="#000"/>
<rect x="566.5" y="487.5" width="7" height="16" fill="#fff" stroke="#000"/>
<rect x="570" y="490" width="10" height="11" fill="#000"/>
<rect x="731.5" y="487.5" width="7" height="16" fill="#fff" stroke="#000"/>
<rect x="726" y="490" width="9" height="11" fill="#000"/>
<rect x="829.5" y="487.5" width="7" height="16" fill="#fff" stroke="#000"/>
<rect x="833" y="490" width="10" height="11" fill="#000"/>
<rect x="430.5" y="494.5" width="91" height="2" fill="#fff" stroke="#000"/>
<rect x="785.5" y="494.5" width="90" height="2" fill="#fff" stroke="#000"/>
<!-- lower windows bedroom -->
<rect x="409.5" y="524.5" width="6" height="62" fill="#fff" stroke="#000"/>
<rect x="904.5" y="524.5" width="4" height="62" fill="#fff" stroke="#000"/>
<!-- towel holder bathroom left -->
<rect x="919.5" y="493.5" width="5" height="54" fill="#ffffd9" stroke="#000"/>
<rect x="918.5" y="489.5" width="7" height="4" fill="#ffffd9" stroke="#000"/>
<rect x="918.5" y="547.5" width="7" height="4" fill="#ffffd9" stroke="#000"/>
</g>
<!-- furniture bedroom -->
<g shape-rendering="crispEdges" stroke="#000" stroke-width="1">
<rect x="505.5" y="116.5" width="62" height="40" fill="#fff"/>
<path d="M506 153.5H567" />
<rect x="528.5" y="156.5" width="17" height="3" fill="#c8c8c8" stroke="#888"/>
<rect x="525.5" y="122.5" width="24" height="24" fill="#fff"/>
<rect x="745.5" y="116.5" width="63" height="40" fill="#fff"/>
<path d="M746 153.5H808" />
<rect x="768.5" y="156.5" width="17" height="3" fill="#c8c8c8" stroke="#888"/>
<rect x="764.5" y="125.5" width="24" height="24" fill="#fff"/>
<!-- bed -->
<rect x="570" y="116" width="174" height="229" fill="#0000f6" stroke="none"/>
<rect x="570" y="116" width="174" height="6" fill="#fff" stroke="none"/><rect x="572" y="116" width="1" height="6" fill="#888" stroke="none"/>
<rect x="570" y="340" width="174" height="6" fill="#fff" stroke="none"/><rect x="570" y="345" width="174" height="1" fill="#555" stroke="none"/>
<rect x="742" y="116.5" width="2" height="229" fill="#fff" stroke="none"/>
<rect x="580.5" y="123.5" width="154" height="44" fill="#ffffd9"/>
<rect x="580" y="145" width="155" height="3" fill="#000" stroke="none"/>
<rect x="575.5" y="199.5" width="164" height="141" fill="#ffffd9"/>
<rect x="482.5" y="180.5" width="81" height="141" fill="#ffffd9"/>
<rect x="751.5" y="183.5" width="81" height="141" fill="#ffffd9"/>
</g>
<g fill="#fff" stroke="#222" stroke-width=".6">
<circle cx="582.0" cy="119" r="1.5"/><circle cx="593.5" cy="119" r="1.5"/><circle cx="605.1" cy="119" r="1.5"/><circle cx="616.6" cy="119" r="1.5"/><circle cx="628.2" cy="119" r="1.5"/><circle cx="639.8" cy="119" r="1.5"/><circle cx="651.3" cy="119" r="1.5"/><circle cx="662.9" cy="119" r="1.5"/><circle cx="674.4" cy="119" r="1.5"/><circle cx="686.0" cy="119" r="1.5"/><circle cx="697.5" cy="119" r="1.5"/><circle cx="709.0" cy="119" r="1.5"/><circle cx="720.6" cy="119" r="1.5"/><circle cx="732.1" cy="119" r="1.5"/>
<circle cx="572.0" cy="342.8" r="1.5"/><circle cx="583.5" cy="342.8" r="1.5"/><circle cx="595.1" cy="342.8" r="1.5"/><circle cx="606.6" cy="342.8" r="1.5"/><circle cx="618.2" cy="342.8" r="1.5"/><circle cx="629.8" cy="342.8" r="1.5"/><circle cx="641.3" cy="342.8" r="1.5"/><circle cx="699.0" cy="342.8" r="1.5"/><circle cx="710.6" cy="342.8" r="1.5"/><circle cx="722.1" cy="342.8" r="1.5"/><circle cx="733.7" cy="342.8" r="1.5"/><circle cx="745.2" cy="342.8" r="1.5"/>
</g>
<g>
<circle cx="613.5" cy="356" r="15" fill="#000"/><circle cx="613.5" cy="356" r="5.5" fill="#c0c0c0"/>
<circle cx="671.5" cy="342.5" r="15.5" fill="#000"/><circle cx="671.5" cy="342.5" r="5.8" fill="#c0c0c0"/>
<circle cx="987.5" cy="443.5" r="15.5" fill="#000"/><circle cx="987.5" cy="443.5" r="5.8" fill="#c0c0c0"/>
</g>
<g shape-rendering="crispEdges" stroke="#000" stroke-width="1">
<rect x="584.5" y="356.5" width="141" height="81" fill="#ffffd9"/>
<rect x="641.5" y="447.5" width="34" height="3" fill="#d0d0d0" stroke="#999"/>
<rect x="589.5" y="450.5" width="137" height="40" fill="#fff"/>
<path d="M590 453.5H726"/>
<rect x="604.5" y="462.5" width="100" height="22" fill="#ffffd9"/>
<rect x="574" y="501" width="11" height="35" fill="#000" stroke="none"/>
<rect x="721" y="501" width="11" height="35" fill="#000" stroke="none"/>
<rect x="585.5" y="501.5" width="135" height="34" fill="#ffffd9"/>
<rect x="601" y="491" width="109" height="2" fill="#ffffd9" stroke="none"/>
<!-- wardrobe -->
<rect x="409.5" y="614.5" width="498" height="79" fill="#ffffd9"/>
<path d="M660.5 615V694"/>
</g>
<g fill="#158a15" stroke="#000" stroke-width=".8" stroke-linejoin="miter">
<path id="star" d="M617 460.5L621 469.5L630.5 470L623.5 477L626 486L617 481L608 486L610.5 477L603.5 470L613 469.5Z"/>
<path d="M617 474V460.5M617 474L630.5 470M617 474L626 486M617 474L608 486M617 474L603.5 470" fill="none" stroke-width=".7"/>
</g>
<g fill="#158a15" stroke="#000" stroke-width=".8" transform="translate(39 0)">
<path d="M617 460.5L621 469.5L630.5 470L623.5 477L626 486L617 481L608 486L610.5 477L603.5 470L613 469.5Z"/>
<path d="M617 474V460.5M617 474L630.5 470M617 474L626 486M617 474L608 486M617 474L603.5 470" fill="none" stroke-width=".7"/>
</g>
<g fill="#158a15" stroke="#000" stroke-width=".8" transform="translate(76 0)">
<path d="M617 460.5L621 469.5L630.5 470L623.5 477L626 486L617 481L608 486L610.5 477L603.5 470L613 469.5Z"/>
<path d="M617 474V460.5M617 474L630.5 470M617 474L626 486M617 474L608 486M617 474L603.5 470" fill="none" stroke-width=".7"/>
</g>
<!-- bathroom windows -->
<g shape-rendering="crispEdges" stroke="#000" stroke-width="1">
<rect x="942.5" y="353.5" width="88" height="6" fill="#fff"/>
<rect x="950.5" y="355.5" width="72" height="3" fill="#fff"/>
<rect x="943" y="354" width="8" height="5" fill="#c8c8c8" stroke="none"/>
<rect x="1022" y="354" width="8" height="5" fill="#c8c8c8" stroke="none"/>
<rect x="1040.5" y="353.5" width="89" height="6" fill="#fff"/>
<rect x="1048.5" y="355.5" width="73" height="3" fill="#fff"/>
<rect x="1041" y="354" width="8" height="5" fill="#c8c8c8" stroke="none"/>
<rect x="1121" y="354" width="8" height="5" fill="#c8c8c8" stroke="none"/>
<rect x="1040.5" y="697.5" width="89" height="6" fill="#fff"/>
<rect x="1048.5" y="699.5" width="73" height="3" fill="#fff"/>
<rect x="1041" y="698" width="8" height="5" fill="#c8c8c8" stroke="none"/>
<rect x="1121" y="698" width="8" height="5" fill="#c8c8c8" stroke="none"/>
<rect x="1159.5" y="385.5" width="7" height="118" fill="#fff"/>
<rect x="1161.5" y="393.5" width="3" height="102" fill="#fff"/>
<rect x="1160" y="386" width="6" height="8" fill="#c8c8c8" stroke="none"/>
<rect x="1160" y="495" width="6" height="8" fill="#c8c8c8" stroke="none"/>
<rect x="1159.5" y="536.5" width="7" height="118" fill="#fff"/>
<rect x="1161.5" y="544.5" width="3" height="102" fill="#fff"/>
<rect x="1160" y="537" width="6" height="8" fill="#c8c8c8" stroke="none"/>
<rect x="1160" y="646" width="6" height="8" fill="#c8c8c8" stroke="none"/>
<!-- table -->
<rect x="1016.5" y="386.5" width="80" height="140" fill="#ffffd9"/>
<!-- sink cabinet -->
<rect x="1104.5" y="372.5" width="53" height="158" fill="#fff"/>
<path d="M1105 442.5H1151M1105 460.5H1151"/>
<rect x="1101.5" y="432.5" width="2" height="40" fill="#ddd" stroke="#999"/>
<rect x="1151" y="376" width="5" height="150" fill="#000" stroke="none"/>
<!-- towel right -->
<rect x="1152.5" y="542.5" width="4" height="53" fill="#ffffd9"/>
<rect x="1151.5" y="538.5" width="6" height="4" fill="#ffffd9"/>
<rect x="1151.5" y="595.5" width="6" height="4" fill="#ffffd9"/>
<!-- shower -->
<rect x="1000" y="595" width="9" height="100" fill="#000" stroke="none"/>
<rect x="918" y="594" width="9" height="13" fill="#000" stroke="none"/>
<rect x="927" y="594" width="73" height="12" fill="#fff" stroke="none"/>
<path d="M930.5 598.5V592.5H924.5V606.5M994.5 598.5V592.5H1000.5V606.5" fill="none" stroke="#000"/>
<!-- box -->
<rect x="1009.5" y="625.5" width="13" height="17" fill="#fff"/>
<path d="M1013.5 626V642"/>
<!-- tanks -->

<rect x="1034.5" y="682.5" width="37" height="13" fill="#fff"/>
</g>
<g stroke="#000" stroke-width="1">
<rect x="1109.5" y="386.5" width="31" height="52" rx="6" fill="#fff"/>
<rect x="1109.5" y="464.5" width="31" height="52" rx="6" fill="#fff"/>
<path d="M1131.5 410.5H1150.5V414.5H1131.5Z M1131.5 488.5H1150.5V492.5H1131.5Z" fill="#fff"/>
<circle cx="1125" cy="412" r="1.8" fill="#fff"/>
<circle cx="1125" cy="490" r="1.8" fill="#fff"/>
<rect x="918.5" y="606.5" width="81" height="89" rx="6" fill="#ffffd9"/>
<rect x="922.5" y="612.5" width="73" height="78" rx="8" fill="none" stroke-width=".8"/>
<circle cx="979.5" cy="629.5" r="4" fill="#ffffd9"/>
<path d="M1032.5 650L1040.5 682.5H1065.5L1073.5 650Z" fill="#fff"/>
<ellipse cx="1052.5" cy="652" rx="12" ry="12.5" fill="#fff"/>
<path d="M1103.5 650Q1104 675 1109.5 695H1139Q1143 675 1143.5 650Z" fill="#fff"/>
<ellipse cx="1123" cy="656" rx="12" ry="17.5" fill="#fff"/>
<rect x="1023.5" y="605.5" width="55" height="45" fill="#ffffd9" shape-rendering="crispEdges"/>
<rect x="1091.5" y="605.5" width="55" height="45" fill="#ffffd9" shape-rendering="crispEdges"/>
</g>
<path d="M931 595L938 567L946 590L953 565L961 595" fill="none" stroke="#777" stroke-width=".8" opacity=".7"/>
</g>

</svg>

<!-- window border -->
<div class="a" style="left:0;top:0;width:1233px;height:1px;background:#5c5c5c"></div>
<div class="a" style="left:0;top:0;width:1px;height:781px;background:#5c5c5c"></div>
<div class="a" style="left:1232px;top:0;width:1px;height:781px;background:#5c5c5c"></div>
<div class="a" style="left:0;top:779px;width:1233px;height:2px;background:#5c5c5c"></div>

</body></html>
